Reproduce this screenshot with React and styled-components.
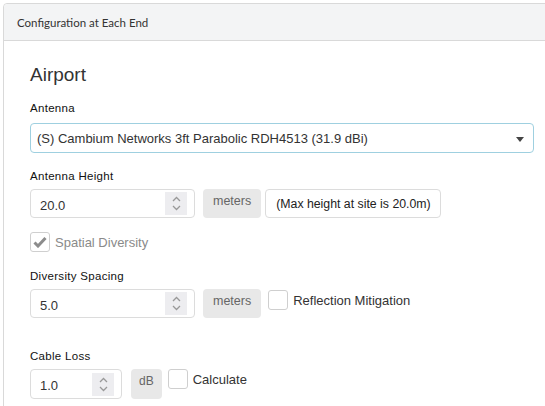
import React from 'react';
import styled, { createGlobalStyle } from 'styled-components';

const GlobalStyle = createGlobalStyle`
  body {
    margin: 0;
    background: #fff;
    overflow: hidden;
    font-family: 'Liberation Sans', Arial, sans-serif;
    color: #333;
  }
`;

const Panel = styled.div`
  margin: 3px 0 0 3px;
  width: 600px;
  height: 440px;
  border: 1px solid #d9d9d9;
  border-radius: 4px 0 0 0;
  box-sizing: border-box;
`;

const PanelHeader = styled.div`
  height: 36px;
  display: flex;
  align-items: center;
  padding-left: 13px;
  background: #f3f4f5;
  border-bottom: 1px solid #d9d9d9;
  border-radius: 4px 0 0 0;
  font-family: Lato, 'Open Sans', sans-serif;
  font-size: 11.5px;
  color: #333;
`;

const PanelBody = styled.div`
  padding: 23px 0 0 26px;
  width: 504px;
`;

const Title = styled.h2`
  margin: 0 0 15px;
  font-size: 19px;
  line-height: 22px;
  font-weight: normal;
  color: #333;
`;

const Label = styled.div`
  margin-top: ${p => p.$top || 0}px;
  margin-bottom: ${p => p.$bottom ?? 6}px;
  font-size: 11.5px;
  line-height: 14px;
  color: #111;
  letter-spacing: 0.3px;
`;

const Select = styled.div`
  height: 30px;
  box-sizing: border-box;
  border: 1px solid #9fd0e0;
  border-radius: 4px;
  display: flex;
  align-items: center;
  justify-content: space-between;
  padding: 0 9px 0 6px;
  font-size: 13px;
  color: #333;
`;

const Caret = styled.span`
  width: 0;
  height: 0;
  border-left: 4px solid transparent;
  border-right: 4px solid transparent;
  border-top: 5px solid #444;
  margin-top: 2px;
`;

const Row = styled.div`
  display: flex;
  align-items: stretch;
  height: ${p => p.$h || 29}px;
  margin-top: ${p => p.$top || 0}px;
`;

const NumberBox = styled.div`
  width: ${p => p.$w}px;
  box-sizing: border-box;
  border: 1px solid #dcdcdc;
  border-radius: 4px;
  display: flex;
  align-items: center;
  justify-content: space-between;
  padding: 0 7px 0 9px;
  font-size: 13px;
  color: #333;
`;

const Value = styled.span`
  padding-top: 3px;
`;

const Spinner = styled.div`
  width: 22px;
  height: 23px;
  background: #ededf0;
  display: flex;
  flex-direction: column;
  align-items: center;
  justify-content: center;
  gap: 3px;
`;

const Addon = styled.div`
  margin-left: ${p => p.$ml || 8}px;
  padding: 5px ${p => p.$px || 10}px 0;
  background: #e8e8e8;
  border-radius: 4px;
  font-size: ${p => p.$fs || 12.5}px;
  color: #666;
  box-sizing: border-box;
`;

const Note = styled.div`
  margin-left: 4px;
  padding: 0 9px 0 10px;
  border: 1px solid #dcdcdc;
  border-radius: 4px;
  display: flex;
  align-items: center;
  font-size: 12.3px;
  color: #222;
`;

const Check = styled.label`
  display: flex;
  align-items: center;
  gap: 5px;
  margin-left: ${p => p.$ml || 0}px;
  margin-top: ${p => p.$mt || 0}px;
  align-self: flex-start;
  font-size: 13px;
  color: ${p => (p.$disabled ? '#8a8a8a' : '#333')};
`;

const Box = styled.span`
  width: 20px;
  height: 20px;
  box-sizing: border-box;
  border: 1px solid #cfcfcf;
  border-radius: 3px;
  background: #fff;
  display: flex;
  align-items: center;
  justify-content: center;
`;

const Chevron = ({ up }) => (
  <svg width="9" height="6" viewBox="0 0 9 6">
    <path
      d={up ? 'M1 5 L4.5 1.5 L8 5' : 'M1 1 L4.5 4.5 L8 1'}
      fill="none"
      stroke="#999"
      strokeWidth="1.3"
    />
  </svg>
);

const NumberField = ({ value, width }) => (
  <NumberBox $w={width}>
    <Value>{value}</Value>
    <Spinner>
      <Chevron up />
      <Chevron />
    </Spinner>
  </NumberBox>
);

const Checkbox = ({ checked, disabled, children, ml, mt }) => (
  <Check $disabled={disabled} $ml={ml} $mt={mt}>
    <Box>
      {checked && (
        <svg width="14" height="12" viewBox="0 0 14 12">
          <path d="M1.5 6.5 L5 10 L12.5 2" fill="none" stroke="#8c8c8c" strokeWidth="3" />
        </svg>
      )}
    </Box>
    {children}
  </Check>
);

export default function App() {
  return (
    <>
      <GlobalStyle />
      <Panel>
        <PanelHeader>Configuration at Each End</PanelHeader>
        <PanelBody>
          <Title>Airport</Title>

          <Label $bottom={8}>Antenna</Label>
          <Select>
            <span>(S) Cambium Networks 3ft Parabolic RDH4513 (31.9 dBi)</span>
            <Caret />
          </Select>

          <Label $top={16}>Antenna Height</Label>
          <Row>
            <NumberField value="20.0" width={165} />
            <Addon>meters</Addon>
            <Note>(Max height at site is 20.0m)</Note>
          </Row>

          <Row $h={20} $top={14}>
            <Checkbox checked disabled>Spatial Diversity</Checkbox>
          </Row>

          <Label $top={17}>Diversity Spacing</Label>
          <Row>
            <NumberField value="5.0" width={165} />
            <Addon>meters</Addon>
            <Checkbox ml={7} mt={1}>Reflection Mitigation</Checkbox>
          </Row>

          <Label $top={31}>Cable Loss</Label>
          <Row $h={30}>
            <NumberField value="1.0" width={92} />
            <Addon $ml={9} $px={8} $fs={12}>dB</Addon>
            <Checkbox ml={6}>Calculate</Checkbox>
          </Row>
        </PanelBody>
      </Panel>
    </>
  );
}
